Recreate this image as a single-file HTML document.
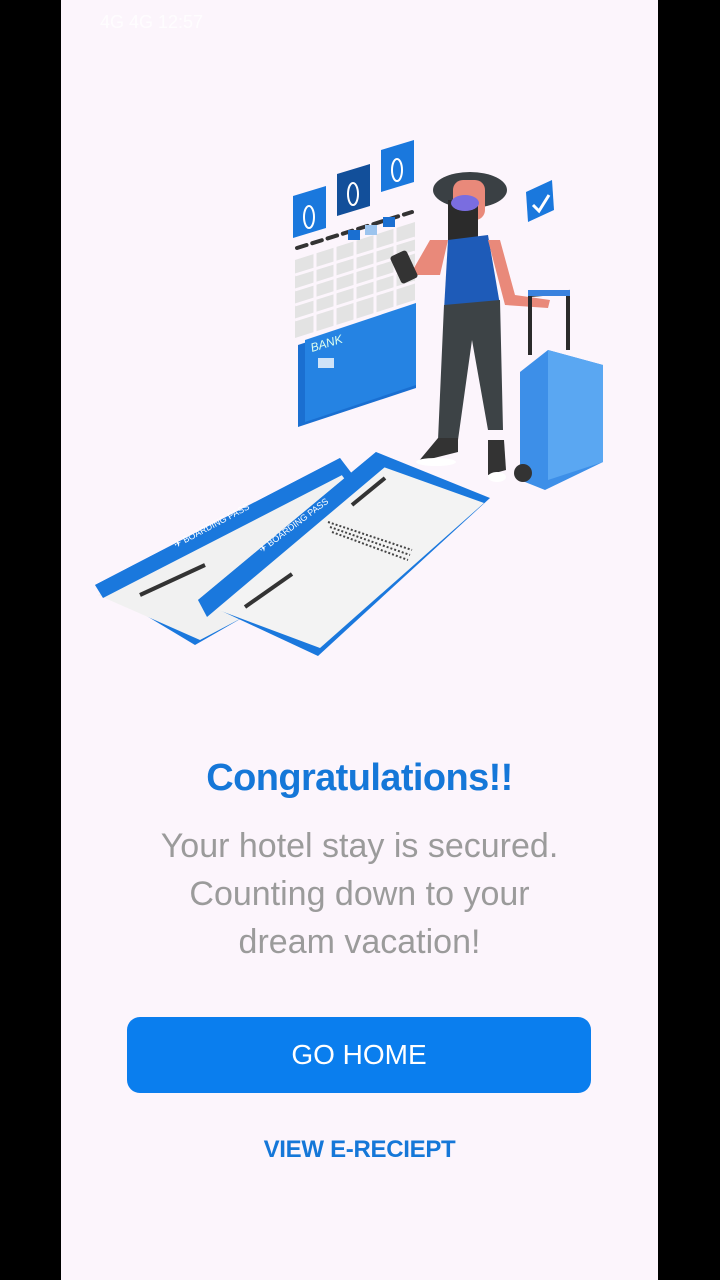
<!DOCTYPE html>
<html><head><meta charset="utf-8"><style>
html,body{margin:0;padding:0;background:#000;}
body{width:720px;height:1280px;position:relative;overflow:hidden;font-family:"Liberation Sans",Arial,sans-serif;}
#app{position:absolute;left:61px;top:0;width:597px;height:1280px;background:#fcf5fc;}
.t{position:absolute;left:0;width:597px;text-align:center;}
#h{top:757px;font-size:38px;font-weight:bold;color:#1577d8;letter-spacing:-0.6px;}
#b{top:822px;font-size:34px;line-height:48px;color:#9b9b9b;}
#btn{position:absolute;left:66px;top:1017px;width:464px;height:76px;border-radius:13px;background:#0a7eee;color:#fff;font-size:28px;line-height:76px;text-align:center;}
#r{top:1136px;font-size:24px;font-weight:bold;color:#1577d8;letter-spacing:-0.3px;}
svg{position:absolute;left:0;top:0;}
</style></head><body>
<div id="app">
<svg width="597" height="700" viewBox="61 0 597 700">
 <text x="100" y="28" font-size="18" fill="#fff" opacity=".8" font-family="Liberation Sans">4G 4G 12:57</text>
 <g fill="#e3e3e3">
  <polygon points="295,260 415,222 415,300 295,338"/>
 </g>
 <g stroke="#fcf5fc" stroke-width="3">
  <line x1="315" y1="250" x2="315" y2="335"/><line x1="335" y1="245" x2="335" y2="330"/><line x1="355" y1="238" x2="355" y2="322"/><line x1="375" y1="232" x2="375" y2="316"/><line x1="395" y1="226" x2="395" y2="310"/>
  <line x1="295" y1="275" x2="415" y2="238"/><line x1="295" y1="290" x2="415" y2="252"/><line x1="295" y1="305" x2="415" y2="267"/><line x1="295" y1="320" x2="415" y2="282"/>
 </g>
 <g stroke="#333" stroke-width="4" stroke-linecap="round">
  <line x1="297" y1="248" x2="412" y2="212" stroke-dasharray="10,6"/>
 </g>
 <rect x="348" y="230" width="12" height="10" fill="#1a6fd1"/><rect x="365" y="225" width="12" height="10" fill="#9cc4ee"/><rect x="383" y="217" width="12" height="10" fill="#1a6fd1"/>
 <polygon points="293,196 326,186 326,228 293,238" fill="#1a78dd"/>
 <polygon points="337,174 370,164 370,206 337,216" fill="#124f9a"/>
 <polygon points="381,150 414,140 414,182 381,192" fill="#1a78dd"/>
 <g fill="none" stroke="#fff" stroke-width="2"><ellipse cx="309" cy="217" rx="5" ry="11"/><ellipse cx="353" cy="194" rx="5" ry="11"/><ellipse cx="397" cy="170" rx="5" ry="11"/></g>
 <polygon points="298,345 416,306 416,388 298,427" fill="#1a6fd1"/>
 <polygon points="305,340 416,303 416,385 305,422" fill="#2583e3"/>
 <text x="312" y="352" font-size="12" fill="#dfe" transform="rotate(-17 312 352)" font-family="Liberation Sans" font-style="italic">BANK</text>
 <rect x="318" y="358" width="16" height="10" fill="#cfe3f8"/>
 <polygon points="526,192 552,180 554,210 528,222" fill="#1a78dd"/>
 <path d="M533,205 l6,6 l10,-16" stroke="#fff" stroke-width="3" fill="none"/>
 <ellipse cx="470" cy="190" rx="37" ry="18" fill="#3a4044"/>
 <rect x="453" y="180" width="32" height="40" rx="10" fill="#e9897a"/>
 <rect x="448" y="200" width="30" height="40" fill="#2b2b2b"/>
 <ellipse cx="465" cy="203" rx="14" ry="8" fill="#7a6de0"/>
 <path d="M448,240 L488,235 L500,305 L444,310 Z" fill="#1e5bb8"/>
 <path d="M430,240 L448,240 L440,275 L410,275 Z" fill="#e9897a"/>
 <path d="M488,240 L500,240 L515,295 L550,300 L548,308 L505,305 Z" fill="#e9897a"/>
 <rect x="395" y="252" width="18" height="30" rx="3" fill="#333" transform="rotate(-25 404 267)"/>
 <path d="M444,305 L500,300 L503,430 L488,430 L472,340 L458,440 L438,440 Z" fill="#3d4346"/>
 <path d="M438,438 l20,0 l0,14 l-40,10 z" fill="#333"/><path d="M488,440 l16,0 l2,30 l-18,5 z" fill="#333"/>
 <ellipse cx="436" cy="462" rx="20" ry="4" fill="#fff"/><ellipse cx="497" cy="477" rx="9" ry="5" fill="#fff"/>
 <path d="M530,355 L530,295 L568,292 L568,350" fill="none" stroke="#2b2b2b" stroke-width="4"/>
 <rect x="528" y="290" width="42" height="6" fill="#3a82de"/>
 <path d="M520,372 L548,350 L603,365 L603,462 L545,490 L520,480 Z" fill="#3d8fe8"/>
 <path d="M548,350 L603,365 L603,462 L548,480 Z" fill="#5aa7f2"/>
 <circle cx="523" cy="473" r="9" fill="#333"/>
 <polygon points="95,585 340,458 395,530 195,645" fill="#1a78dd"/>
 <polygon points="98,595 338,470 390,540 200,640" fill="#f1f1f1"/>
 <polygon points="95,585 340,458 348,472 103,598" fill="#1a78dd"/>
 <polygon points="198,600 376,452 490,498 318,656" fill="#1a78dd"/>
 <polygon points="205,605 378,465 484,503 320,648" fill="#f3f3f3"/>
 <polygon points="198,600 376,452 385,467 207,617" fill="#1a78dd"/>
 <g stroke="#333" stroke-width="4"><line x1="245" y1="607" x2="292" y2="574"/><line x1="140" y1="595" x2="205" y2="565"/><line x1="352" y1="505" x2="385" y2="478"/></g>
 <g stroke="#444" stroke-width="2" stroke-dasharray="2,2"><line x1="328" y1="522" x2="412" y2="550"/><line x1="330" y1="527" x2="410" y2="555"/><line x1="332" y1="532" x2="408" y2="560"/></g>
 <text x="262" y="553" font-size="9" fill="#fff" transform="rotate(-37 262 553)" font-family="Liberation Sans">✈ BOARDING PASS</text>
 <text x="176" y="548" font-size="9" fill="#fff" transform="rotate(-28 176 548)" font-family="Liberation Sans">✈ BOARDING PASS</text>
</svg>
<div class="t" id="h">Congratulations!!</div>
<div class="t" id="b">Your hotel stay is secured.<br>Counting down to your<br>dream vacation!</div>
<div id="btn">GO HOME</div>
<div class="t" id="r">VIEW E-RECIEPT</div>
</div>
</body></html>
